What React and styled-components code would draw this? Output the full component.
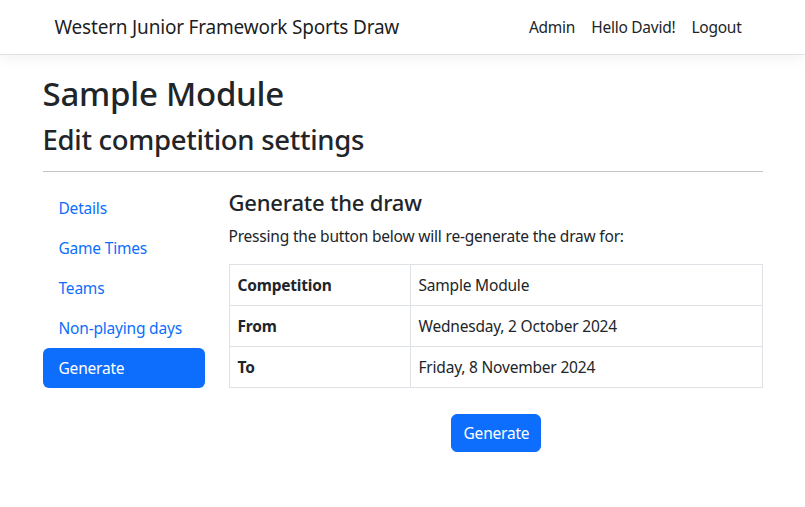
import React from "react";
import styled, { createGlobalStyle } from "styled-components";

const GlobalStyle = createGlobalStyle`
  html, body {
    margin: 0;
    padding: 0;
    background: #fff;
  }
  body {
    font-family: "Noto Sans", "Open Sans", "Liberation Sans", sans-serif;
    font-size: 16px;
    line-height: 24px;
    color: #212529;
  }
  * { box-sizing: border-box; }
`;

const Header = styled.header`
  height: 55px;
  background: #fff;
  border-bottom: 1px solid #dee2e6;
  box-shadow: 0 4px 12px rgba(0, 0, 0, 0.05);
  margin-bottom: 19px;
`;

const NavContainer = styled.div`
  max-width: 720px;
  height: 100%;
  margin: 0 auto;
  padding: 0 12px;
  display: flex;
  align-items: center;
  justify-content: space-between;
`;

const Brand = styled.a`
  font-size: 19px;
  line-height: 30px;
  color: rgba(0, 0, 0, 0.9);
  text-decoration: none;
  letter-spacing: -0.2px;
  margin-top: -1px;
`;

const NavList = styled.nav`
  display: flex;
  margin-top: -1px;
  margin-right: 1px;
`;

const NavLink = styled.a`
  padding: 8px;
  font-size: 15.5px;
  color: #212529;
  text-decoration: none;
  letter-spacing: -0.25px;
`;

const Main = styled.main`
  max-width: 720px;
  margin: 0 auto;
`;

const Title = styled.h1`
  font-size: 33px;
  font-weight: 500;
  line-height: 40px;
  margin: 0 0 9px;
  letter-spacing: -0.25px;
`;

const Subtitle = styled.h2`
  font-size: 27.5px;
  font-weight: 500;
  line-height: 34px;
  margin: 0;
  letter-spacing: -0.3px;
`;

const Rule = styled.hr`
  border: 0;
  border-top: 1px solid #c4c4c4;
  margin: 14px 0 16px;
`;

const Layout = styled.div`
  display: flex;
  gap: 24px;
  align-items: flex-start;
`;

const SideNav = styled.div`
  width: 162px;
  flex-shrink: 0;
  display: flex;
  flex-direction: column;
`;

const Pill = styled.a`
  display: block;
  padding: 8px 16px;
  border-radius: 6px;
  font-size: 15.5px;
  line-height: 24px;
  text-decoration: none;
  letter-spacing: -0.2px;
  color: ${(p) => (p.$active ? "#fff" : "#0d6efd")};
  background: ${(p) => (p.$active ? "#0d6efd" : "transparent")};
`;

const Content = styled.section`
  flex: 1;
  display: flex;
  flex-direction: column;
`;

const SectionTitle = styled.h4`
  font-size: 22px;
  font-weight: 500;
  line-height: 28px;
  margin: 0 0 8px;
  letter-spacing: -0.2px;
`;

const Lead = styled.p`
  margin: 0 0 16px;
  font-size: 15.5px;
  letter-spacing: -0.2px;
`;

const Table = styled.table`
  width: 100%;
  border-collapse: collapse;
  margin-bottom: 26px;
`;

const HeadCell = styled.th`
  width: 181px;
  text-align: left;
  font-weight: 700;
  font-size: 15.5px;
  line-height: 24px;
  letter-spacing: -0.2px;
  padding: 8px;
  border: 1px solid #dee2e6;
`;

const Cell = styled.td`
  padding: 8px;
  font-size: 15.5px;
  line-height: 24px;
  letter-spacing: -0.2px;
  border: 1px solid #dee2e6;
`;

const Actions = styled.div`
  display: flex;
  justify-content: center;
`;

const Button = styled.button`
  font-family: inherit;
  font-size: 15.5px;
  letter-spacing: -0.2px;
  line-height: 24px;
  color: #fff;
  background: #0d6efd;
  border: 1px solid #0d6efd;
  border-radius: 6px;
  padding: 6px 12px;
  width: 90px;
  cursor: pointer;
`;

const rows = [
  ["Competition", "Sample Module"],
  ["From", "Wednesday, 2 October 2024"],
  ["To", "Friday, 8 November 2024"],
];

const pills = ["Details", "Game Times", "Teams", "Non-playing days", "Generate"];

export default function App() {
  return (
    <>
      <GlobalStyle />
      <Header>
        <NavContainer>
          <Brand href="#">Western Junior Framework Sports Draw</Brand>
          <NavList>
            <NavLink href="#">Admin</NavLink>
            <NavLink href="#">Hello David!</NavLink>
            <NavLink href="#">Logout</NavLink>
          </NavList>
        </NavContainer>
      </Header>
      <Main>
        <Title>Sample Module</Title>
        <Subtitle>Edit competition settings</Subtitle>
        <Rule />
        <Layout>
          <SideNav>
            {pills.map((p) => (
              <Pill key={p} href="#" $active={p === "Generate"}>
                {p}
              </Pill>
            ))}
          </SideNav>
          <Content>
            <SectionTitle>Generate the draw</SectionTitle>
            <Lead>Pressing the button below will re-generate the draw for:</Lead>
            <Table>
              <tbody>
                {rows.map(([k, v]) => (
                  <tr key={k}>
                    <HeadCell>{k}</HeadCell>
                    <Cell>{v}</Cell>
                  </tr>
                ))}
              </tbody>
            </Table>
            <Actions>
              <Button>Generate</Button>
            </Actions>
          </Content>
        </Layout>
      </Main>
    </>
  );
}
